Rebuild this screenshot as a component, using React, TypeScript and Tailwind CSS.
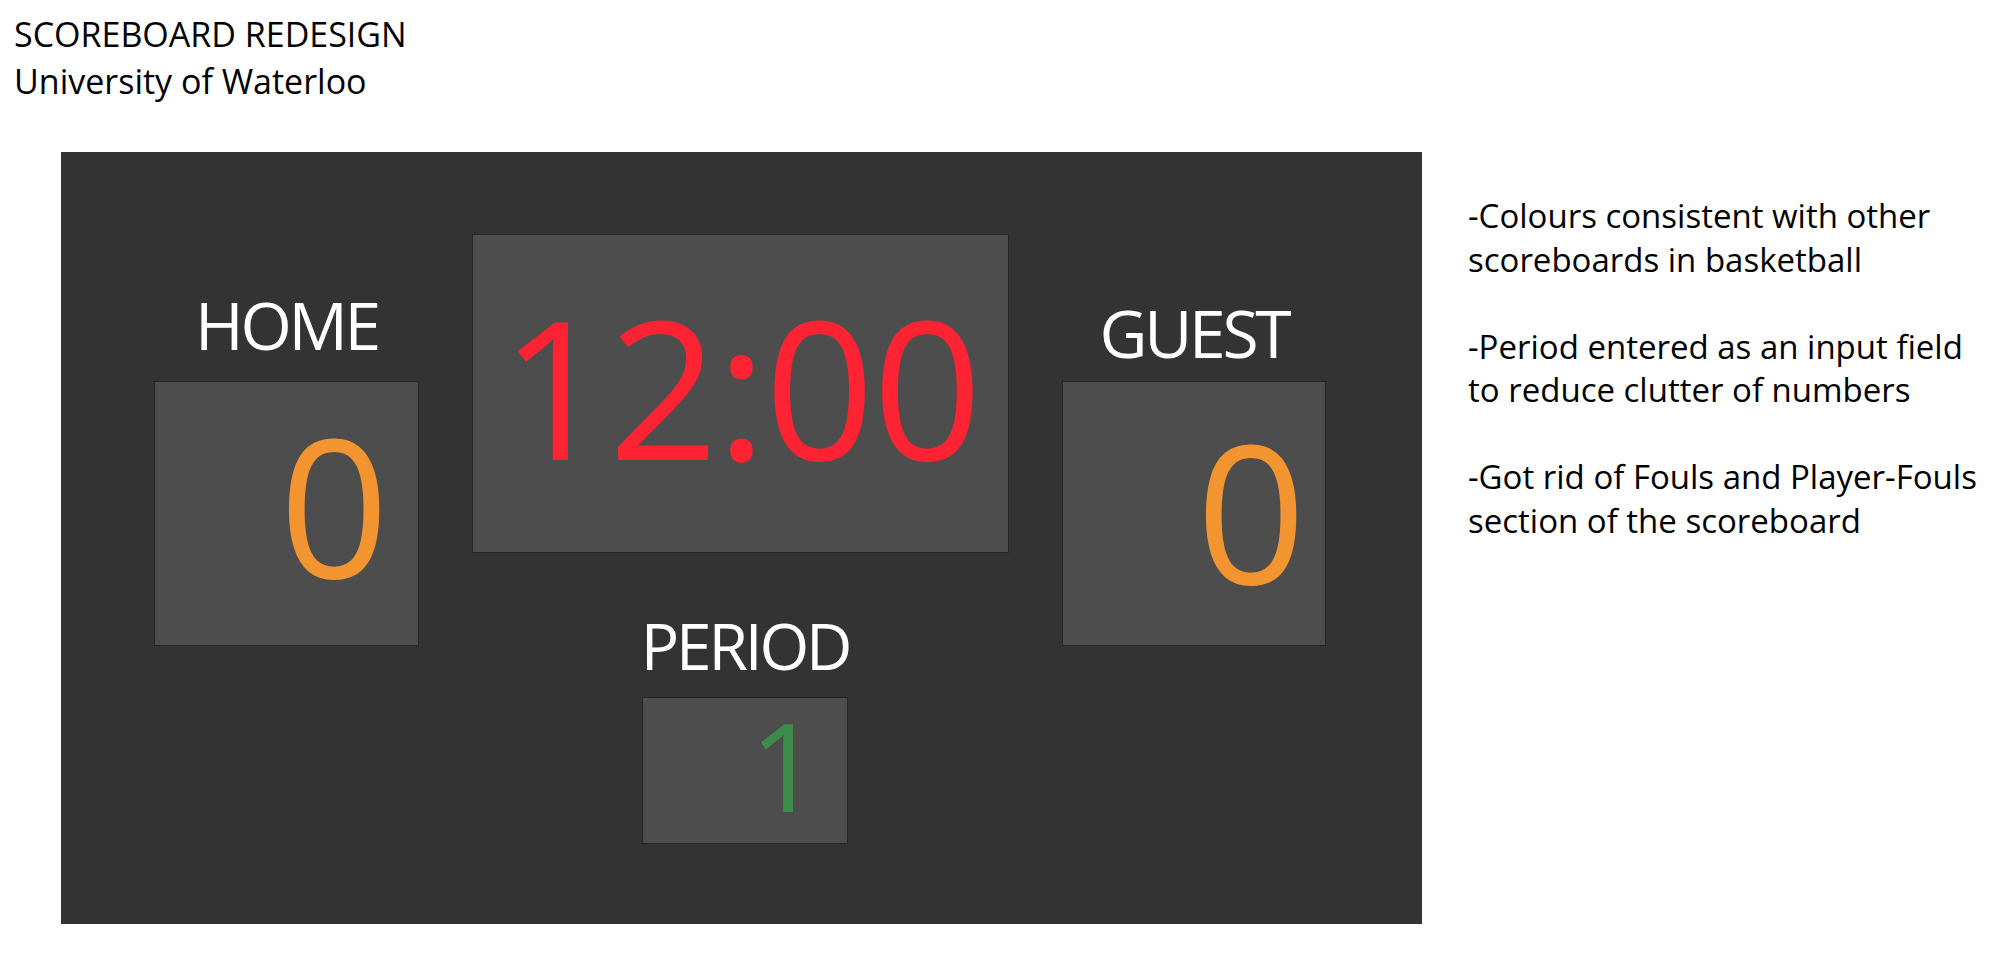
import React from "react";

const font = { fontFamily: '"Open Sans", "Noto Sans", sans-serif' };

function ScoreBox({ value, className, innerClass }: { value: string; className: string; innerClass: string }) {
  return (
    <div className={`flex items-center justify-end border border-[#262626] bg-[#4d4d4d] ${className}`}>
      <span className={`leading-none ${innerClass}`}>{value}</span>
    </div>
  );
}

export default function App() {
  return (
    <div className="min-h-[958px] w-[1998px] bg-white text-black" style={font}>
      <div className="pl-[14px] pt-[11px] text-[34px] font-medium leading-[47px]">
        <div>SCOREBOARD REDESIGN</div>
        <div>University of Waterloo</div>
      </div>
      <div className="mt-[47px] flex items-start">
        <div className="ml-[61px] flex h-[772px] w-[1361px] items-start gap-[53px] bg-[#333333] pl-[93px]">
          <div className="flex w-[265px] flex-col items-center">
            <div className="mt-[139px] text-[66px] leading-none tracking-[-0.05em] text-white">HOME</div>
            <ScoreBox
              value="0"
              className="mt-[24px] h-[265px] w-[265px] pb-[20px] pr-[29px]"
              innerClass="text-[192px] text-[#f29430]"
            />
          </div>
          <div className="flex w-[537px] flex-col items-center">
            <div className="mt-[82px] flex h-[319px] w-[537px] items-center justify-center border border-[#262626] bg-[#4d4d4d] pb-[16px]">
              <span className="text-[192px] leading-none tracking-[-0.01em] text-[#fe2333]">12:00</span>
            </div>
            <div className="ml-[9px] mt-[61px] flex flex-col items-center">
              <div className="text-[64px] leading-none tracking-[-0.05em] text-white">PERIOD</div>
              <ScoreBox
                value="1"
                className="mt-[19px] h-[147px] w-[206px] pb-[12px] pr-[27px]"
                innerClass="text-[123px] text-[#3e8c4b]"
              />
            </div>
          </div>
          <div className="flex w-[264px] flex-col items-center">
            <div className="mt-[147px] text-[66px] leading-none tracking-[-0.05em] text-white">GUEST</div>
            <ScoreBox
              value="0"
              className="mt-[16px] h-[265px] w-[264px] pb-[8px] pr-[19px]"
              innerClass="text-[192px] text-[#f29430]"
            />
          </div>
        </div>
        <div className="ml-[46px] mt-[42px] text-[33px] font-medium leading-[43.5px]">
          <div>-Colours consistent with other</div>
          <div>scoreboards in basketball</div>
          <div className="h-[43.5px]" />
          <div>-Period entered as an input field</div>
          <div>to reduce clutter of numbers</div>
          <div className="h-[43.5px]" />
          <div>-Got rid of Fouls and Player-Fouls</div>
          <div>section of the scoreboard</div>
        </div>
      </div>
    </div>
  );
}
